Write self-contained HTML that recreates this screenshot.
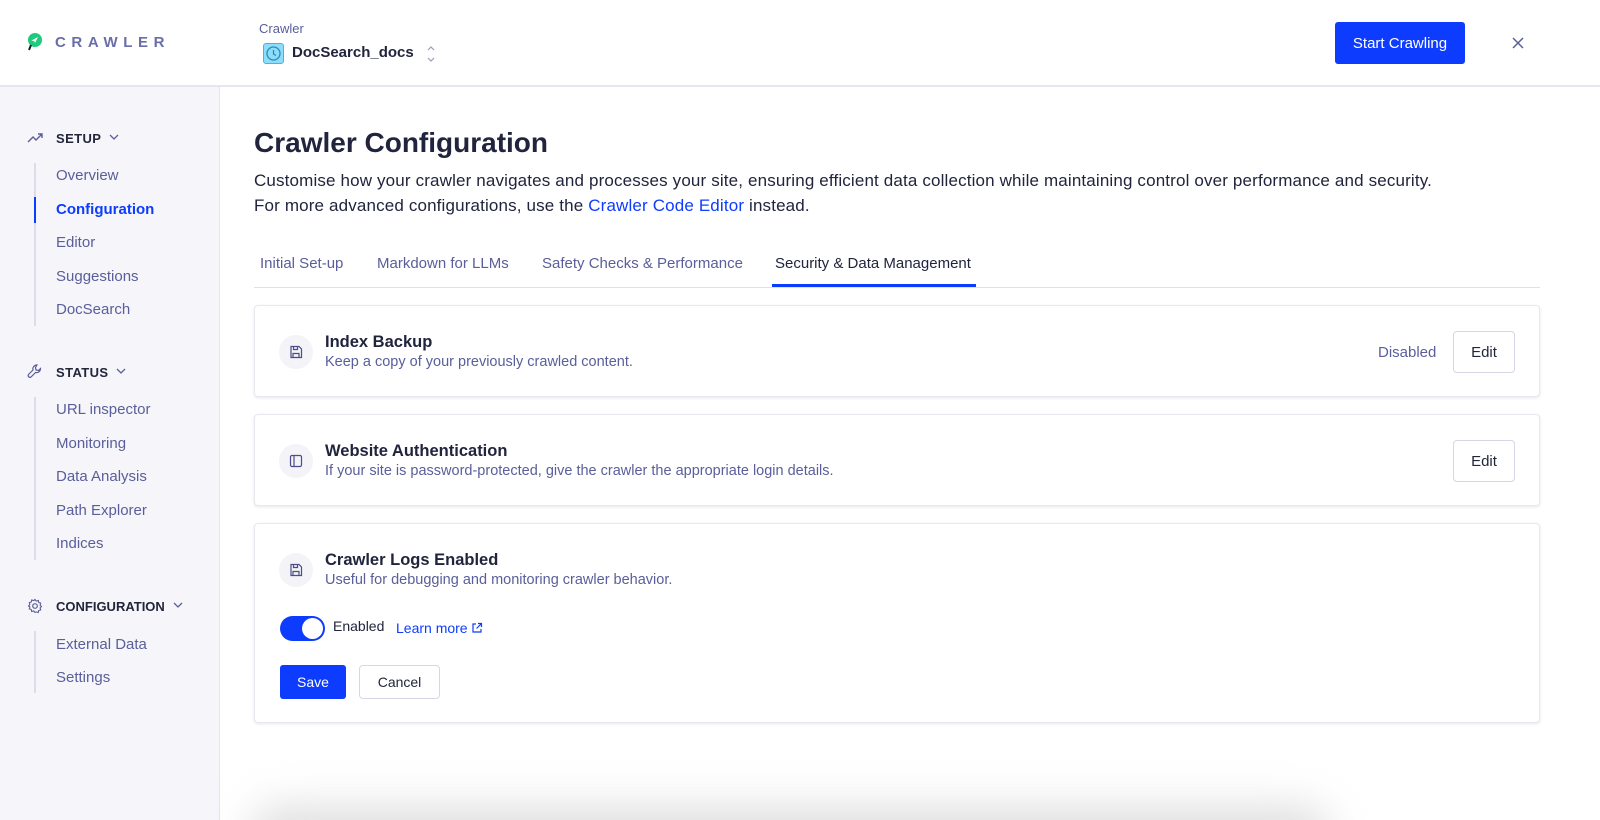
<!DOCTYPE html>
<html style="overflow:hidden;height:820px"><head><meta charset="utf-8"><style>
*{box-sizing:border-box;margin:0;padding:0}
body{width:1600px;height:820px;overflow:hidden;font-family:"Liberation Sans",sans-serif;background:#fff;position:relative;color:#23263b}
.top{position:absolute;left:0;top:0;width:1600px;height:87px;border-bottom:2px solid #e6e6ef;background:#fff}
.side{position:absolute;left:0;top:87px;width:220px;height:733px;background:#f5f5fa;border-right:1px solid #e4e4ef}
.abs{position:absolute}
.sh{position:absolute;left:56px;font-size:13px;font-weight:bold;letter-spacing:.4px;color:#23263b}
.si{position:absolute;left:56px;font-size:15px;color:#5a5e9a}
.vl{position:absolute;left:34px;width:2px;background:#dcdcea}
.card{position:absolute;left:254px;width:1286px;background:#fff;border:1px solid #e8e8f0;border-radius:4px;box-shadow:0 1px 3px rgba(0,0,0,.1)}
.ic{position:absolute;left:24px;width:34px;height:34px;border-radius:50%;background:#f3f3f8;display:flex;align-items:center;justify-content:center}
.ct{position:absolute;left:70px;font-size:16.5px;color:#21243d;font-weight:bold}
.cd{position:absolute;left:70px;font-size:14.5px;color:#5a5e9a}
.btn{position:absolute;border:1px solid #d6d6e7;border-radius:4px;background:#fff;font-size:15px;color:#23263b;display:flex;align-items:center;justify-content:center}
.tab{position:absolute;top:255px;font-size:15px;color:#5a5e9a}
</style></head><body>
<div class="top">
  <svg class="abs" style="left:27px;top:33px" width="16" height="18" viewBox="0 0 16 18"><circle cx="8" cy="7" r="7" fill="#1ecb7b"/><path d="M4.5 7.5 11 4 8 10 7.3 8.2z" fill="#fff"/><path d="M4 12 2 17" stroke="#1a1a2e" stroke-width="2"/></svg>
  <div class="abs" style="left:55px;top:34px;font-size:15px;letter-spacing:5.6px;color:#6a6ea8;font-weight:bold">CRAWLER</div>
  <div class="abs" style="left:259px;top:21px;font-size:13px;color:#5a5e9a">Crawler</div>
  <div class="abs" style="left:263px;top:43px;width:21px;height:21px;background:#8fdcf8;border:1px solid #3bb9ea;border-radius:3px"><svg width="19" height="19" viewBox="0 0 19 19"><circle cx="9.5" cy="9.5" r="6.5" fill="none" stroke="#1d8fc8" stroke-width="1.3"/><path d="M9.5 6v4l2.5 1.5" fill="none" stroke="#1d8fc8" stroke-width="1.3"/></svg></div>
  <div class="abs" style="left:292px;top:44px;font-size:15px;font-weight:bold;color:#21243d">DocSearch_docs</div>
  <svg class="abs" style="left:426px;top:45px" width="10" height="18" viewBox="0 0 10 18"><path d="M2 5l3-3 3 3M2 13l3 3 3-3" fill="none" stroke="#9a9cc0" stroke-width="1.2"/></svg>
  <div class="abs" style="left:1335px;top:22px;width:130px;height:42px;background:#0e3cff;border-radius:3px;color:#fff;font-size:15px;display:flex;align-items:center;justify-content:center">Start Crawling</div>
  <svg class="abs" style="left:1512px;top:37px" width="12" height="12" viewBox="0 0 12 12"><path d="M1 1l10 10M11 1 1 11" stroke="#5a5e9a" stroke-width="1.5"/></svg>
</div>
<div class="side">
  <svg class="abs" style="left:27px;top:45px" width="16" height="12" viewBox="0 0 16 12"><path d="M1 10l5-5 3 3 6-6M11 2h4v4" fill="none" stroke="#5a5e9a" stroke-width="1.4"/></svg>
  <div class="sh" style="top:44px">SETUP</div>
  <svg class="abs" style="left:109px;top:47px" width="10" height="7"><path d="M1 1l4 4 4-4" fill="none" stroke="#5a5e9a" stroke-width="1.3"/></svg>
  <div class="vl" style="top:76px;height:163px"></div>
  <div class="vl" style="top:110px;height:26px;background:#0e3cff"></div>
  <div class="si" style="top:80px">Overview</div>
  <div class="si" style="top:114px;color:#0e3cff;font-weight:bold">Configuration</div>
  <div class="si" style="top:147px">Editor</div>
  <div class="si" style="top:181px">Suggestions</div>
  <div class="si" style="top:214px">DocSearch</div>
  <svg class="abs" style="left:27px;top:277px" width="16" height="16" viewBox="0 0 16 16"><path d="M10 1a4 4 0 0 0-4 5L1.5 10.5a1.8 1.8 0 0 0 2.5 2.5L8.5 8.5a4 4 0 0 0 5-4l-2 2-2.5-.5-.5-2.5z" fill="none" stroke="#5a5e9a" stroke-width="1.2"/></svg>
  <div class="sh" style="top:278px">STATUS</div>
  <svg class="abs" style="left:116px;top:281px" width="10" height="7"><path d="M1 1l4 4 4-4" fill="none" stroke="#5a5e9a" stroke-width="1.3"/></svg>
  <div class="vl" style="top:310px;height:163px"></div>
  <div class="si" style="top:314px">URL inspector</div>
  <div class="si" style="top:348px">Monitoring</div>
  <div class="si" style="top:381px">Data Analysis</div>
  <div class="si" style="top:415px">Path Explorer</div>
  <div class="si" style="top:448px">Indices</div>
  <svg class="abs" style="left:27px;top:511px" width="16" height="16" viewBox="0 0 16 16"><circle cx="8" cy="8" r="2.3" fill="none" stroke="#5a5e9a" stroke-width="1.2"/><path d="M8 1.5l1.3 1.6 2-.6.4 2 2 .6-.6 2 1.4 1.4-1.4 1.4.6 2-2 .6-.4 2-2-.6L8 14.5l-1.3-1.6-2 .6-.4-2-2-.6.6-2L1.5 8l1.4-1.4-.6-2 2-.6.4-2 2 .6z" fill="none" stroke="#5a5e9a" stroke-width="1.1"/></svg>
  <div class="sh" style="top:512px;letter-spacing:0">CONFIGURATION</div>
  <svg class="abs" style="left:173px;top:515px" width="10" height="7"><path d="M1 1l4 4 4-4" fill="none" stroke="#5a5e9a" stroke-width="1.3"/></svg>
  <div class="vl" style="top:544px;height:62px"></div>
  <div class="si" style="top:549px">External Data</div>
  <div class="si" style="top:582px">Settings</div>
</div>
<div class="abs" style="left:254px;top:127px;font-size:28px;font-weight:bold;color:#21243d">Crawler Configuration</div>
<div class="abs" style="left:254px;top:168px;font-size:17px;line-height:25px;color:#21243d;letter-spacing:0.15px">Customise how your crawler navigates and processes your site, ensuring efficient data collection while maintaining control over performance and security.<br>For more advanced configurations, use the <span style="color:#0e3cff">Crawler Code Editor</span> instead.</div>
<div class="tab" style="left:260px">Initial Set-up</div>
<div class="tab" style="left:377px">Markdown for LLMs</div>
<div class="tab" style="left:542px">Safety Checks &amp; Performance</div>
<div class="tab" style="left:775px;color:#21243d">Security &amp; Data Management</div>
<div class="abs" style="left:254px;top:287px;width:1286px;height:1px;background:#dfe0ea"></div>
<div class="abs" style="left:772px;top:284px;width:204px;height:3px;background:#0e3cff"></div>

<div class="card" style="top:305px;height:92px">
  <div class="ic" style="top:29px"><svg width="14" height="14" viewBox="0 0 14 14"><path d="M2 1.5h8l2.5 2.5v8.5h-10.5zM4 12.5v-4h6v4M4.5 1.5v3h4v-3" fill="none" stroke="#4a4e8a" stroke-width="1.2"/></svg></div>
  <div class="ct" style="top:27px">Index Backup</div>
  <div class="cd" style="top:48px">Keep a copy of your previously crawled content.</div>
  <div class="abs" style="left:1123px;top:38px;font-size:15px;color:#5a5e9a">Disabled</div>
  <div class="btn" style="left:1198px;top:25px;width:62px;height:42px">Edit</div>
</div>
<div class="card" style="top:414px;height:92px">
  <div class="ic" style="top:29px"><svg width="14" height="14" viewBox="0 0 14 14"><rect x="1.5" y="1.5" width="11" height="11" rx="1.5" fill="none" stroke="#4a4e8a" stroke-width="1.2"/><path d="M5 1.5v11" stroke="#4a4e8a" stroke-width="1.2"/></svg></div>
  <div class="ct" style="top:27px">Website Authentication</div>
  <div class="cd" style="top:48px">If your site is password-protected, give the crawler the appropriate login details.</div>
  <div class="btn" style="left:1198px;top:25px;width:62px;height:42px">Edit</div>
</div>
<div class="card" style="top:523px;height:200px">
  <div class="ic" style="top:29px"><svg width="14" height="14" viewBox="0 0 14 14"><path d="M2 1.5h8l2.5 2.5v8.5h-10.5zM4 12.5v-4h6v4M4.5 1.5v3h4v-3" fill="none" stroke="#4a4e8a" stroke-width="1.2"/></svg></div>
  <div class="ct" style="top:27px">Crawler Logs Enabled</div>
  <div class="cd" style="top:48px">Useful for debugging and monitoring crawler behavior.</div>
  <div class="abs" style="left:25px;top:92px;width:45px;height:25px;border-radius:13px;background:#0e3cff"><div style="position:absolute;right:2px;top:2px;width:21px;height:21px;border-radius:50%;background:#fff"></div></div>
  <div class="abs" style="left:78px;top:94px;font-size:14px;color:#21243d">Enabled</div>
  <div class="abs" style="left:141px;top:96px;font-size:14px;color:#0e3cff">Learn more <svg width="12" height="12" viewBox="0 0 12 12" style="vertical-align:-1px"><path d="M5 2H2v8h8V7M7 1.5h3.5V5M10.5 1.5 5.5 6.5" fill="none" stroke="#0e3cff" stroke-width="1.2"/></svg></div>
  <div class="abs" style="left:25px;top:141px;width:66px;height:34px;background:#0e3cff;border-radius:3px;color:#fff;font-size:14px;display:flex;align-items:center;justify-content:center">Save</div>
  <div class="btn" style="left:104px;top:141px;width:81px;height:34px;font-size:14px">Cancel</div>
</div>
<div class="abs" style="left:0;top:740px;width:1600px;height:80px;overflow:hidden"><div style="position:absolute;left:250px;top:65px;width:1080px;height:60px;border-radius:30px;background:#e0e0e0;filter:blur(20px)"></div></div>
</body></html>
